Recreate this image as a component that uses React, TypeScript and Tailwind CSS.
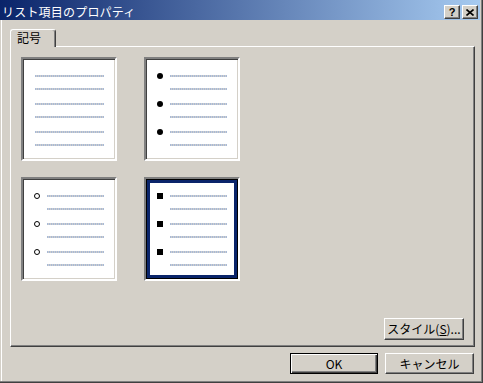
import React from "react";

const LINE =
  "h-[2px] bg-[repeating-linear-gradient(90deg,#a8bad8_0px,#a8bad8_1px,#cdcdcd_1px,#cdcdcd_2px)]";

function PlainBox() {
  return (
    <div className="w-[96px] h-[104px] bg-white border-2 border-t-[#808080] border-l-[#808080] border-r-white border-b-white shadow-[inset_1px_1px_0_#404040,inset_-1px_-1px_0_#d4d0c8] pl-[12px] pt-[16px] flex flex-col gap-[13px]">
      {[0, 1, 2].map((i) => (
        <div key={i} className="flex flex-col gap-[11px]">
          <div className={LINE + " w-[69px]"} />
          <div className={LINE + " w-[69px]"} />
        </div>
      ))}
    </div>
  );
}

function BulletBox({ kind, selected }: { kind: "disc" | "circle" | "square"; selected?: boolean }) {
  const bullet =
    kind === "disc" ? (
      <div className="w-[6px] h-[6px] shrink-0 rounded-full bg-black" />
    ) : kind === "circle" ? (
      <div className="w-[6px] h-[6px] shrink-0 rounded-full border border-black bg-white" />
    ) : (
      <div className="w-[6px] h-[6px] shrink-0 bg-black" />
    );
  return (
    <div
      className={
        selected
          ? "w-[96px] h-[104px] bg-white border-2 border-t-[#808080] border-l-[#808080] border-r-white border-b-white shadow-[inset_0_0_0_1px_#000,inset_0_0_0_4px_#0a246a] pl-[11px] pt-[16px] flex flex-col gap-[13px]"
          : "w-[96px] h-[104px] bg-white border-2 border-t-[#808080] border-l-[#808080] border-r-white border-b-white shadow-[inset_1px_1px_0_#404040,inset_-1px_-1px_0_#d4d0c8] pl-[11px] pt-[16px] flex flex-col gap-[13px]"
      }
    >
      {[0, 1, 2].map((i) => (
        <div key={i} className="flex flex-col gap-[11px]">
          <div className="flex h-[2px] items-center gap-[7px]">
            {bullet}
            <div className={LINE + " w-[57px]"} />
          </div>
          <div className={LINE + " w-[57px] ml-[13px]"} />
        </div>
      ))}
    </div>
  );
}

const RAISED =
  "bg-[#d4d0c8] border border-t-white border-l-white border-r-[#404040] border-b-[#404040] shadow-[inset_-1px_-1px_0_#808080]";

export default function App() {
  return (
    <div className="w-[483px] h-[383px] bg-[#d4d0c8] border-r border-b border-r-[#404040] border-b-[#404040] shadow-[inset_-1px_-1px_0_#808080,inset_1px_0_0_#d4d0c8,inset_2px_0_0_#fff] flex flex-col font-['Noto_Sans_CJK_JP',sans-serif] text-[12px] text-black overflow-hidden">
      {/* Title bar */}
      <div className="w-[480px] h-[20px] shrink-0 bg-[linear-gradient(90deg,#0a246a,#a6caf0)] flex items-start">
        <div className="flex-1 pl-[2px] pt-[4px] h-full flex items-center text-white text-[12px] leading-none tracking-[0.2px]">
          リスト項目のプロパティ
        </div>
        <div className="flex gap-[2px] pt-[5px] pr-[2px]">
          <div className={RAISED + " w-[16px] h-[14px] flex items-center justify-center"}>
            <span className="font-['Liberation_Sans',sans-serif] font-bold text-[11px] leading-none">?</span>
          </div>
          <div className={RAISED + " w-[16px] h-[14px] flex items-center justify-center"}>
            <svg width="8" height="7" viewBox="0 0 8 7">
              <path d="M0.5 0.5 L7.5 6.5 M7.5 0.5 L0.5 6.5" stroke="black" strokeWidth="1.6" />
            </svg>
          </div>
        </div>
      </div>

      {/* Tabs + panel */}
      <div className="pl-[10px] pt-[9px] flex flex-col">
        <div className="relative z-10 w-[46px] h-[18px] -mb-px bg-[#d4d0c8] border-t border-l border-r border-t-white border-l-white border-r-[#404040] rounded-tl-[3px] rounded-tr-[3px] shadow-[inset_-1px_0_0_#808080] flex items-center pl-[6px] pb-[1px] leading-none">
          記号
        </div>
        <div className="w-[465px] h-[301px] border border-t-white border-l-white border-r-[#404040] border-b-[#404040] shadow-[inset_-1px_-1px_0_#808080] flex flex-col">
          <div className="pl-[10px] pt-[10px] grid grid-cols-[96px_96px] grid-rows-[104px_104px] gap-x-[27px] gap-y-[16px]">
            <PlainBox />
            <BulletBox kind="disc" />
            <BulletBox kind="circle" />
            <BulletBox kind="square" selected />
          </div>
          <div className="flex-1" />
          <div className="flex justify-end pr-[10px] pb-[6px]">
            <div className={RAISED + " w-[80px] h-[22px] flex items-center justify-center leading-none"}>
              スタイル(<span className="underline">S</span>)...
            </div>
          </div>
        </div>
      </div>

      {/* Bottom buttons */}
      <div className="w-[474px] pt-[6px] flex justify-end gap-[7px]">
        <div className="w-[88px] h-[21px] border border-black bg-[#d4d0c8] shadow-[inset_1px_1px_0_#fff,inset_-1px_-1px_0_#404040,inset_-2px_-2px_0_#808080] flex items-center justify-center leading-none">
          OK
        </div>
        <div className={RAISED + " w-[89px] h-[21px] flex items-center justify-center leading-none"}>
          キャンセル
        </div>
      </div>
    </div>
  );
}
